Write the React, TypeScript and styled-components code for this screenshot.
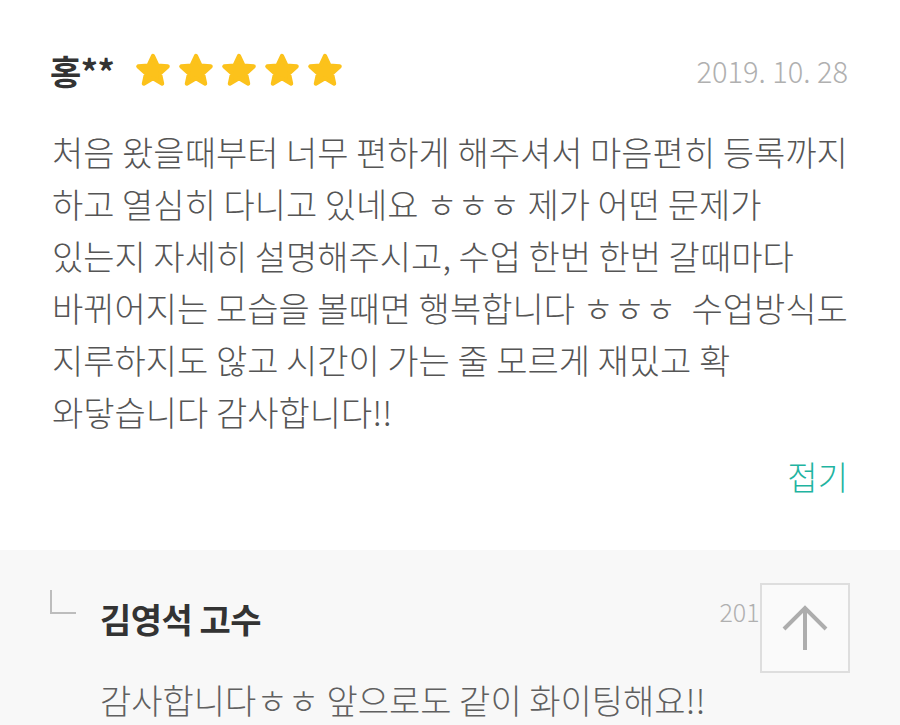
import React from 'react';
import styled, { createGlobalStyle } from 'styled-components';

const GlobalStyle = createGlobalStyle`
  html, body {
    margin: 0;
    padding: 0;
    background: #ffffff;
  }
  body {
    font-family: "Noto Sans CJK KR", "Noto Sans", sans-serif;
    overflow: hidden;
  }
`;

const Page = styled.div`
  width: 900px;
  height: 725px;
  position: relative;
  overflow: hidden;
  background: #f8f8f8;
`;

const Review = styled.section`
  background: #ffffff;
  padding: 48px 52px 54px 50px;
`;

const HeaderRow = styled.div`
  display: flex;
  align-items: center;
  height: 44px;
`;

const Name = styled.span`
  font-size: 34px;
  font-weight: 700;
  color: #333333;
  margin-right: 20px;
  letter-spacing: -0.5px;
`;

const Stars = styled.div`
  display: flex;
  gap: 5px;
  align-items: center;
`;

const DateText = styled.span`
  margin-left: auto;
  font-size: 29px;
  font-weight: 300;
  color: #b0b0b0;
`;

const Body = styled.p`
  margin: 34px 0 0 2px;
  font-size: 34px;
  font-weight: 300;
  line-height: 52px;
  color: #555555;
  white-space: pre;
`;

const FoldRow = styled.div`
  display: flex;
  justify-content: flex-end;
  margin-top: 18px;
  height: 40px;
  align-items: center;
`;

const FoldButton = styled.span`
  font-size: 33px;
  font-weight: 300;
  color: #1fb4a1;
`;

const Reply = styled.section`
  padding: 48px 50px 0 50px;
`;

const ReplyHeader = styled.div`
  display: flex;
  align-items: center;
  height: 40px;
`;

const Corner = styled.span`
  width: 24px;
  height: 22px;
  border-left: 2px solid #bdbdbd;
  border-bottom: 2px solid #bdbdbd;
  align-self: flex-start;
  margin-top: -8px;
  margin-right: 24px;
`;

const ReplyName = styled.span`
  font-size: 34px;
  font-weight: 700;
  color: #333333;
  letter-spacing: -0.5px;
`;

const ReplyDate = styled.span`
  margin-left: auto;
  font-size: 25px;
  font-weight: 300;
  color: #b0b0b0;
  margin-top: -14px;
`;

const ReplyBody = styled.p`
  margin: 36px 0 0 50px;
  font-size: 34px;
  font-weight: 300;
  line-height: 52px;
  color: #606060;
  white-space: pre;
`;

const TopButton = styled.button`
  position: absolute;
  left: 760px;
  top: 583px;
  width: 90px;
  height: 90px;
  box-sizing: border-box;
  border: 2px solid #dedede;
  background: #fafafa;
  display: flex;
  align-items: center;
  justify-content: center;
  padding: 0;
`;

const Star = () => (
  <svg width="38" height="37" viewBox="0 0 24 23">
    <path
      d="M12 2.2 L14.8 8.3 L21.3 8.9 L16.4 13.3 L17.8 19.8 L12 16.4 L6.2 19.8 L7.6 13.3 L2.7 8.9 L9.2 8.3 Z"
      fill="#fcc21b"
      stroke="#fcc21b"
      strokeWidth="2.6"
      strokeLinejoin="round"
    />
  </svg>
);

const ArrowUp = () => (
  <svg width="46" height="46" viewBox="0 0 46 46" fill="none" stroke="#adadad" strokeWidth="4">
    <path d="M23 3 V45" />
    <path d="M2 24 L23 3 L44 24" strokeLinejoin="miter" />
  </svg>
);

const lines = [
  '처음 왔을때부터 너무 편하게 해주셔서 마음편히 등록까지',
  '하고 열심히 다니고 있네요 ㅎㅎㅎ 제가 어떤 문제가',
  '있는지 자세히 설명해주시고, 수업 한번 한번 갈때마다',
  '바뀌어지는 모습을 볼때면 행복합니다 ㅎㅎㅎ  수업방식도',
  '지루하지도 않고 시간이 가는 줄 모르게 재밌고 확',
  '와닿습니다 감사합니다!!',
];

export default function App() {
  return (
    <Page>
      <GlobalStyle />
      <Review>
        <HeaderRow>
          <Name>홍**</Name>
          <Stars>
            {[0, 1, 2, 3, 4].map((i) => (
              <Star key={i} />
            ))}
          </Stars>
          <DateText>2019. 10. 28</DateText>
        </HeaderRow>
        <Body>{lines.join('\n')}</Body>
        <FoldRow>
          <FoldButton>접기</FoldButton>
        </FoldRow>
      </Review>
      <Reply>
        <ReplyHeader>
          <Corner />
          <ReplyName>김영석 고수</ReplyName>
          <ReplyDate>2019. 10. 29</ReplyDate>
        </ReplyHeader>
        <ReplyBody>감사합니다ㅎㅎ 앞으로도 같이 화이팅해요!!</ReplyBody>
      </Reply>
      <TopButton aria-label="맨 위로">
        <ArrowUp />
      </TopButton>
    </Page>
  );
}
